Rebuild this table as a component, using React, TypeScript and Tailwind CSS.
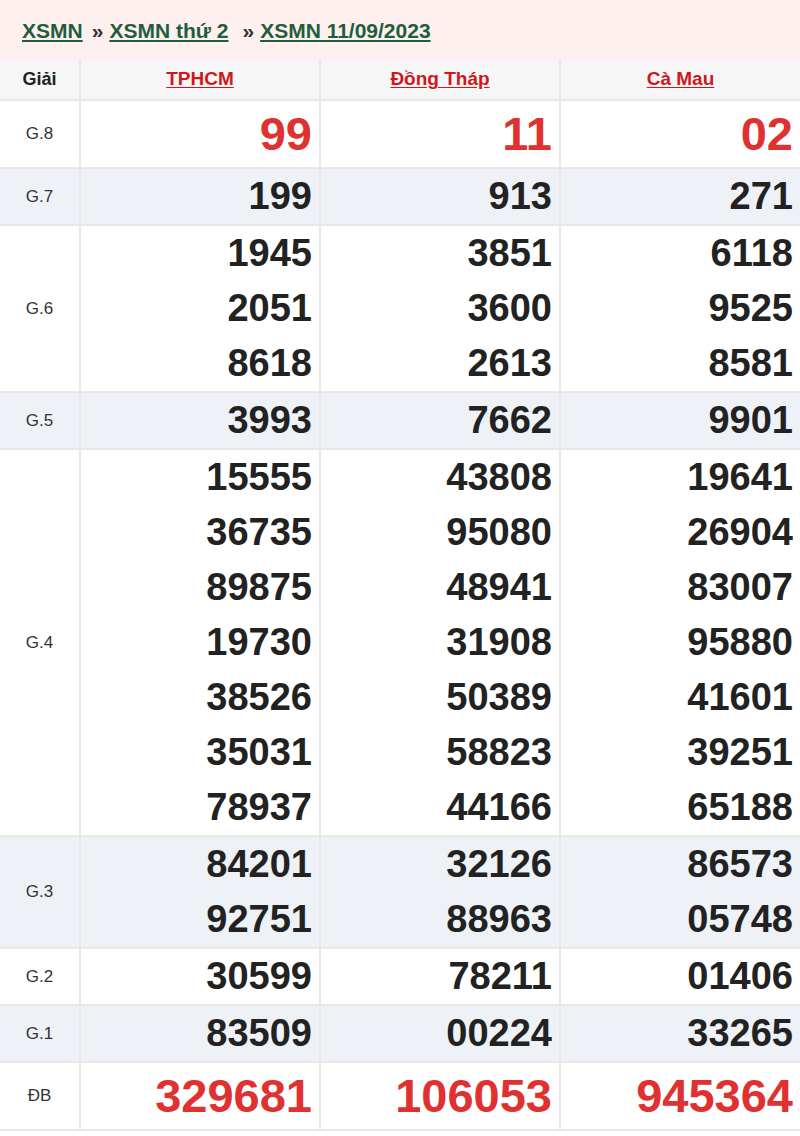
const stations = ["TPHCM", "Đồng Tháp", "Cà Mau"];

type Row = { label: string; values: string[][]; big?: boolean; alt?: boolean };

const rows: Row[] = [
  { label: "G.8", values: [["99"], ["11"], ["02"]], big: true },
  { label: "G.7", values: [["199"], ["913"], ["271"]], alt: true },
  {
    label: "G.6",
    values: [
      ["1945", "2051", "8618"],
      ["3851", "3600", "2613"],
      ["6118", "9525", "8581"],
    ],
  },
  { label: "G.5", values: [["3993"], ["7662"], ["9901"]], alt: true },
  {
    label: "G.4",
    values: [
      ["15555", "36735", "89875", "19730", "38526", "35031", "78937"],
      ["43808", "95080", "48941", "31908", "50389", "58823", "44166"],
      ["19641", "26904", "83007", "95880", "41601", "39251", "65188"],
    ],
  },
  {
    label: "G.3",
    values: [
      ["84201", "92751"],
      ["32126", "88963"],
      ["86573", "05748"],
    ],
    alt: true,
  },
  { label: "G.2", values: [["30599"], ["78211"], ["01406"]] },
  { label: "G.1", values: [["83509"], ["00224"], ["33265"]], alt: true },
  { label: "ĐB", values: [["329681"], ["106053"], ["945364"]], big: true },
];

export default function App() {
  return (
    <div className="w-[800px] bg-white font-['Liberation_Sans',Arial,sans-serif]">
      <div className="h-[60px] bg-[#fdf0ef] flex items-center pl-[22px] pt-[2px] text-[21px] font-bold text-[#333]">
        <a className="text-[#1f5e3c] underline underline-offset-2">XSMN</a>
        <span className="ml-[9px] mr-[6px]">»</span>
        <a className="text-[#1f5e3c] underline underline-offset-2">XSMN thứ 2</a>
        <span className="ml-[14px] mr-[6px]">»</span>
        <a className="text-[#1f5e3c] underline underline-offset-2">XSMN 11/09/2023</a>
      </div>
      <table className="w-full border-collapse table-fixed">
        <colgroup>
          <col className="w-[80px]" />
          <col className="w-[240px]" />
          <col className="w-[240px]" />
          <col className="w-[240px]" />
        </colgroup>
        <thead>
          <tr className="h-[40px] bg-[#f6f6f6]">
            <th className="border-2 border-[#e8e8e8] border-t-0 border-l-0 text-[18px] font-semibold text-[#222]">
              Giải
            </th>
            {stations.map((s) => (
              <th
                key={s}
                className="border-2 border-[#e8e8e8] border-t-0 last:border-r-0 text-[19px] font-bold"
              >
                <a className="text-[#d0171c] underline underline-offset-2">{s}</a>
              </th>
            ))}
          </tr>
        </thead>
        <tbody>
          {rows.map((r) => (
            <tr key={r.label} className={r.alt ? "bg-[#eef2f7]" : "bg-white"}>
              <td className="border-2 border-[#e8e8e8] border-l-0 text-center text-[17px] text-[#333]">
                {r.label}
              </td>
              {r.values.map((col, i) => (
                <td
                  key={i}
                  className="border-2 border-[#e8e8e8] last:border-r-0 text-right pr-[7px] align-middle"
                >
                  {col.map((n) => (
                    <div
                      key={n}
                      className={
                        r.big
                          ? "text-[47px] leading-[66px] font-bold text-[#e03131]"
                          : "text-[38px] leading-[55px] font-bold text-[#222]"
                      }
                    >
                      {n}
                    </div>
                  ))}
                </td>
              ))}
            </tr>
          ))}
        </tbody>
      </table>
    </div>
  );
}
